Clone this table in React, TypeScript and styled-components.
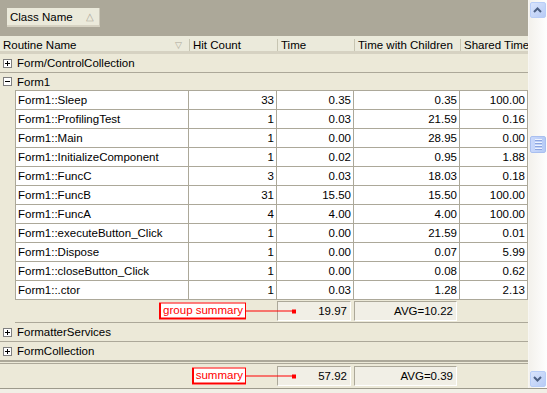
import React from "react"
import styled, { createGlobalStyle } from "styled-components"

const Global = createGlobalStyle`
  html, body { margin: 0; padding: 0; background: #ece9d8; }
  * { box-sizing: border-box; }
`

const rows: [string, number, string, string, string][] = [
    ["Form1::Sleep", 33, "0.35", "0.35", "100.00"],
    ["Form1::ProfilingTest", 1, "0.03", "21.59", "0.16"],
    ["Form1::Main", 1, "0.00", "28.95", "0.00"],
    ["Form1::InitializeComponent", 1, "0.02", "0.95", "1.88"],
    ["Form1::FuncC", 3, "0.03", "18.03", "0.18"],
    ["Form1::FuncB", 31, "15.50", "15.50", "100.00"],
    ["Form1::FuncA", 4, "4.00", "4.00", "100.00"],
    ["Form1::executeButton_Click", 1, "0.00", "21.59", "0.01"],
    ["Form1::Dispose", 1, "0.00", "0.07", "5.99"],
    ["Form1::closeButton_Click", 1, "0.00", "0.08", "0.62"],
    ["Form1::.ctor", 1, "0.03", "1.28", "2.13"],
]

const LINE = "#aca899"

const Frame = styled.div`
  width: 547px;
  height: 393px;
  display: flex;
  flex-direction: column;
  font-family: Tahoma, "Liberation Sans", Arial, sans-serif;
  font-size: 11.5px;
  color: #000;
  background: #ece9d8;
  overflow: hidden;
`
const Body = styled.div`
  display: flex;
  height: 388px;
`
const Main = styled.div`
  width: 528px;
  display: flex;
  flex-direction: column;
`
const BottomStrip = styled.div`
  height: 5px;
  border-top: 1px solid #9d9a8c;
  background: #f1efe6;
`
const GroupPanel = styled.div`
  height: 36px;
  background: ${LINE};
  padding: 8px 0 0 7px;
`
const GroupButton = styled.div`
  width: 93px;
  height: 19px;
  display: flex;
  align-items: center;
  justify-content: space-between;
  padding: 0 5px 0 3px;
  background: #ebeadb;
  border-right: 1px solid #cbc7b8;
  border-bottom: 2px solid #d6d2c2;
`
const SortMark = styled.span`
  color: #aca899;
  font-size: 10px;
`
const Header = styled.div`
  height: 18px;
  display: grid;
  grid-template-columns: 189px 88px 77px 106px 68px;
  background: #ebeadb;
  border-bottom: 3px solid #d6d2c2;
`
const HeadCell = styled.div<{ $first?: boolean }>`
  display: flex;
  align-items: center;
  justify-content: space-between;
  padding: 0 0 0 ${(p) => (p.$first ? 3 : 3)}px;
  border-left: ${(p) => (p.$first ? "none" : "1px solid #c7c5b2")};
  margin: 3px 0 0;
  white-space: nowrap;
  overflow: hidden;
`
const Filter = styled.span`
  color: #aca899;
  font-size: 9px;
  margin-right: 7px;
`
const GroupRow = styled.div<{ $open?: boolean }>`
  height: ${(p) => (p.$open ? 17 : 19)}px;
  display: flex;
  align-items: center;
  gap: 5px;
  padding-left: 3px;
  border-bottom: ${(p) => (p.$open ? "none" : `1px solid ${LINE}`)};
`
const Toggle = styled.span`
  width: 9px;
  height: 9px;
  border: 1px solid #7f7f7f;
  background: #fff;
  position: relative;
  flex: none;
  &::before {
    content: "";
    position: absolute;
    left: 1px;
    top: 3px;
    width: 5px;
    height: 1px;
    background: #000;
  }
`
const Plus = styled(Toggle)`
  &::after {
    content: "";
    position: absolute;
    left: 3px;
    top: 1px;
    width: 1px;
    height: 5px;
    background: #000;
  }
`
const Nested = styled.div`
  padding-left: 15px;
`
const DataBlock = styled.div`
  border-top: 1px solid ${LINE};
  border-left: 1px solid ${LINE};
  background: #fff;
`
const DataRow = styled.div`
  height: 19px;
  display: grid;
  grid-template-columns: 173px 88px 77px 106px 68px;
`
const Cell = styled.div<{ $num?: boolean }>`
  border-right: 1px solid ${LINE};
  border-bottom: 1px solid ${LINE};
  display: flex;
  align-items: center;
  justify-content: ${(p) => (p.$num ? "flex-end" : "flex-start")};
  padding: 0 2px;
  white-space: nowrap;
`
const SummaryRow = styled.div<{ $top?: boolean }>`
  position: relative;
  height: ${(p) => (p.$top ? 27 : 23)}px;
  display: grid;
  grid-template-columns: ${(p) => (p.$top ? "277px" : "262px")} 77px 106px 68px;
  align-items: center;
  border-top: ${(p) => (p.$top ? `3px double ${LINE}` : "none")};
  border-bottom: ${(p) => (p.$top ? "none" : `1px solid ${LINE}`)};
`
const SumCell = styled.div`
  height: 20px;
  margin-right: 3px;
  display: flex;
  align-items: center;
  justify-content: flex-end;
  padding-right: 3px;
  background: #f1efe6;
  border-top: 1px solid ${LINE};
  border-left: 1px solid ${LINE};
  border-bottom: 1px solid #fff;
  border-right: 1px solid #fff;
`
const Note = styled.div<{ $right: number }>`
  position: absolute;
  top: 50%;
  right: ${(p) => p.$right}px;
  transform: translateY(-50%);
  display: flex;
  align-items: center;
`
const NoteLabel = styled.span`
  background: #fff;
  color: #f00;
  border: 1px solid #f00;
  border-left-width: 2px;
  border-bottom-width: 2px;
  padding: 0 2px 1px 2px;
  line-height: 13px;
`
const NoteLine = styled.span`
  width: 46px;
  height: 1px;
  background: #f00;
`
const NoteDot = styled.span`
  width: 4px;
  height: 4px;
  background: #f00;
`
const ScrollBar = styled.div`
  width: 19px;
  display: flex;
  flex-direction: column;
  align-items: center;
  padding: 2px 2px 1px 1px;
  background: linear-gradient(90deg, #f3f1ec, #fefefe);
  border-left: 1px solid #f7f6f2;
`
const ScrollBtn = styled.div`
  width: 16px;
  height: 16px;
  border-radius: 2px;
  border: 1px solid #b8cdf7;
  background: linear-gradient(135deg, #d9e4fc, #b7cbf5);
  display: flex;
  align-items: center;
  justify-content: center;
`
const Track = styled.div`
  flex: 1;
  width: 100%;
  padding-top: 118px;
`
const Thumb = styled.div`
  width: 16px;
  height: 17px;
  border-radius: 2px;
  border: 1px solid #a9bff0;
  background: linear-gradient(90deg, #c9d8fb, #b6cbf6);
  display: flex;
  flex-direction: column;
  align-items: center;
  justify-content: center;
  gap: 1px;
`
const Grip = styled.span`
  width: 7px;
  height: 1px;
  background: #eef3fe;
  box-shadow: 0 1px 0 #8ca5e0;
  margin-bottom: 1px;
`

function Arrow({ up }: { up?: boolean }) {
    return (
        <svg width="9" height="6" viewBox="0 0 9 6">
            <path d={up ? "M1 5 L4.5 1.5 L8 5" : "M1 1 L4.5 4.5 L8 1"} fill="none" stroke="#4d6185" strokeWidth="2" />
        </svg>
    )
}

export default function App() {
    return (
        <Frame>
            <Global />
            <Body>
                <Main>
                    <GroupPanel>
                        <GroupButton>
                            Class Name <SortMark>△</SortMark>
                        </GroupButton>
                    </GroupPanel>
                    <Header>
                        <HeadCell $first>
                            Routine Name <Filter>▽</Filter>
                        </HeadCell>
                        <HeadCell>Hit Count</HeadCell>
                        <HeadCell>Time</HeadCell>
                        <HeadCell>Time with Children</HeadCell>
                        <HeadCell>Shared Time</HeadCell>
                    </Header>
                    <GroupRow>
                        <Plus />
                        Form/ControlCollection
                    </GroupRow>
                    <GroupRow $open>
                        <Toggle />
                        Form1
                    </GroupRow>
                    <Nested>
                        <DataBlock>
                            {rows.map((r) => (
                                <DataRow key={r[0]}>
                                    <Cell>{r[0]}</Cell>
                                    <Cell $num>{r[1]}</Cell>
                                    <Cell $num>{r[2]}</Cell>
                                    <Cell $num>{r[3]}</Cell>
                                    <Cell $num>{r[4]}</Cell>
                                </DataRow>
                            ))}
                        </DataBlock>
                        <SummaryRow>
                            <span />
                            <SumCell>19.97</SumCell>
                            <SumCell>AVG=10.22</SumCell>
                            <span />
                            <Note $right={232}>
                                <NoteLabel>group summary</NoteLabel>
                                <NoteLine />
                                <NoteDot />
                            </Note>
                        </SummaryRow>
                    </Nested>
                    <GroupRow>
                        <Plus />
                        FormatterServices
                    </GroupRow>
                    <GroupRow>
                        <Plus />
                        FormCollection
                    </GroupRow>
                    <SummaryRow $top>
                        <span />
                        <SumCell>57.92</SumCell>
                        <SumCell>AVG=0.39</SumCell>
                        <span />
                        <Note $right={232}>
                            <NoteLabel>summary</NoteLabel>
                            <NoteLine />
                            <NoteDot />
                        </Note>
                    </SummaryRow>
                </Main>
                <ScrollBar>
                    <ScrollBtn>
                        <Arrow up />
                    </ScrollBtn>
                    <Track>
                        <Thumb>
                            <Grip />
                            <Grip />
                            <Grip />
                            <Grip />
                        </Thumb>
                    </Track>
                    <ScrollBtn>
                        <Arrow />
                    </ScrollBtn>
                </ScrollBar>
            </Body>
            <BottomStrip />
        </Frame>
    )
}
